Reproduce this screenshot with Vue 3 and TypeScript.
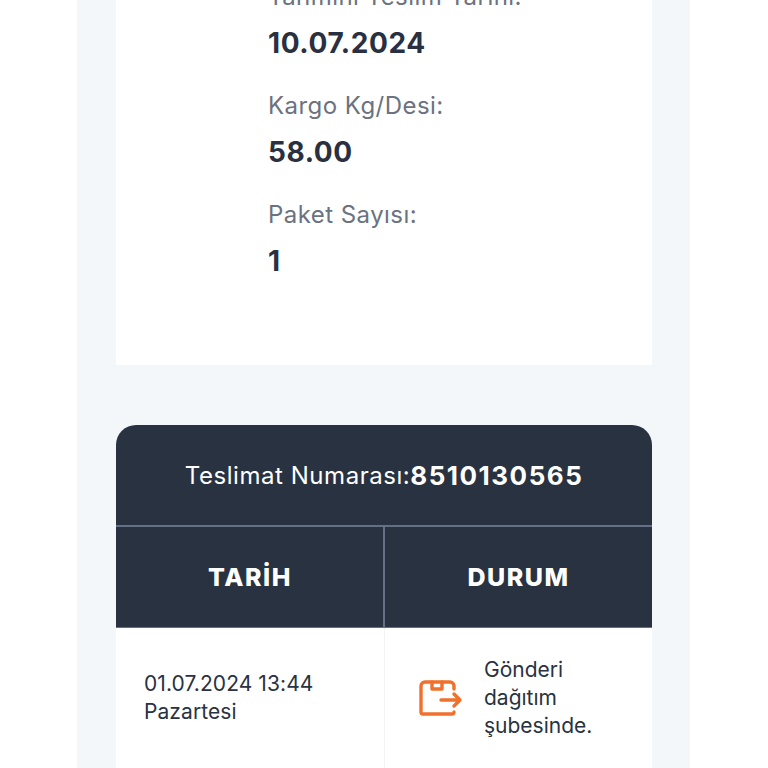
<script setup lang="ts">
interface Info {
  label: string;
  value: string;
}

const infos: Info[] = [
  { label: "Tahmini Teslim Tarihi:", value: "10.07.2024" },
  { label: "Kargo Kg/Desi:", value: "58.00" },
  { label: "Paket Sayısı:", value: "1" },
];
</script>

<template>
  <div class="page">
    <div class="panel">
      <section class="card">
        <div v-for="info in infos" :key="info.label" class="info">
          <div class="label">{{ info.label }}</div>
          <div class="value">{{ info.value }}</div>
        </div>
      </section>

      <section class="table">
        <div class="title">Teslimat Numarası:<strong>8510130565</strong></div>
        <div class="head">
          <div class="th">TARİH</div>
          <div class="th">DURUM</div>
        </div>
        <div class="row">
          <div class="date">01.07.2024 13:44<br />Pazartesi</div>
          <div class="status">
            <svg width="44" height="36" viewBox="0 0 44 36" fill="none" stroke="#f0702c" stroke-width="3.4" stroke-linecap="round" stroke-linejoin="round">
              <path d="M35 9V6a4 4 0 0 0-4-4H6a4 4 0 0 0-4 4v26a2 2 0 0 0 2 2h29a2 2 0 0 0 2-2" />
              <path d="M13 2v7h10V2" />
              <path d="M22 20h19M35 14l6 6-6 6" />
            </svg>
            <span>Gönderi dağıtım şubesinde.</span>
          </div>
        </div>
      </section>
    </div>
  </div>
</template>

<style>
html, body { background: #fff; overflow: hidden; }
</style>

<style scoped>
.page { height: 768px; overflow: hidden; font-family: Inter, "Liberation Sans", sans-serif; }
.panel { width: 613px; margin-left: 77px; height: 900px; margin-top: -20px; padding: 0 38px 0 39px; box-sizing: border-box; background: #f3f7fa; }
.card { background: #fff; height: 385px; padding-left: 152px; box-sizing: border-box; }
.info { height: 109px; }
.label { font-size: 24px; line-height: 34px; color: #6b7280; letter-spacing: 0.45px; }
.value { font-size: 28px; font-weight: 700; line-height: 34px; margin-top: 12px; color: #283041; letter-spacing: 0.6px; }
.table { margin-top: 60px; background: #fff; border-radius: 20px 20px 0 0; overflow: hidden; }
.title { height: 100px; background: #293241; color: #fff; font-size: 24px; letter-spacing: 0.55px; display: flex; align-items: center; justify-content: center; }
.title strong { font-weight: 700; font-size: 26px; letter-spacing: 1.5px; }
.head { display: grid; grid-template-columns: 268px 268px; background: #293241; border-top: 2px solid #667085; }
.th { height: 100px; display: flex; align-items: center; justify-content: center; color: #fff; font-size: 25px; font-weight: 800; letter-spacing: 1.5px; }
.th + .th { border-left: 2px solid #667085; margin-left: -1px; }
.row { display: grid; grid-template-columns: 268px 268px; height: 140px; border-top: 1px solid #667085; }
.date { display: flex; flex-direction: column; justify-content: center; padding-left: 28px; font-size: 21px; line-height: 28px; color: #293241; letter-spacing: 0.08px; }
.status { display: flex; align-items: center; gap: 21px; padding-left: 34px; border-left: 1px solid #f1f3f5; font-size: 21px; line-height: 28px; color: #293241; }
.status span { width: 130px; }
</style>
